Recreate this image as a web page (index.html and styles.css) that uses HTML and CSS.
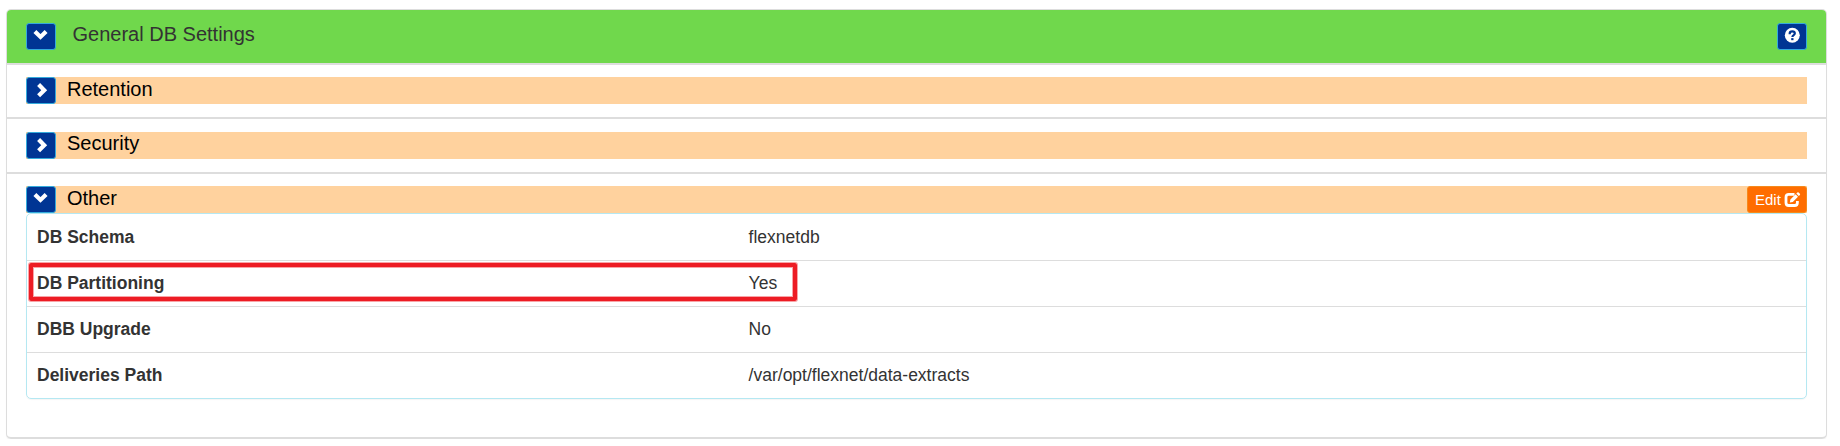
FILE: index.html
```html
<!DOCTYPE html>
<html lang="en">
<head>
<meta charset="utf-8">
<title>General DB Settings</title>
<link rel="stylesheet" href="styles.css">
</head>
<body>
<main class="panel">
  <header class="panel-head">
    <button class="btn" aria-label="Collapse"><svg class="icon" viewBox="0 0 28 25"><path d="M7.9 7.5 13.5 12.9 19.1 7.5" fill="none" stroke="#fff" stroke-width="4.2"/></svg></button>
    <h1 class="title">General DB Settings</h1>
    <button class="btn help" aria-label="Help"><svg class="icon" viewBox="0 0 28 25"><circle cx="14.3" cy="11.2" r="7.5" fill="#fff"/><path d="M11.7 10.2V9.6C11.7 8 12.7 7.4 14.3 7.4S16.8 8.2 16.8 9.6C16.8 11.2 14.4 11 14.4 12.9" fill="none" stroke="#003594" stroke-width="2.2"/><path d="M13.2 14.1h2.3v2.1h-2.3z" fill="#003594"/></svg></button>
  </header>
  <section class="section">
    <div class="bar">
      <button class="btn" aria-label="Expand"><svg class="icon" viewBox="0 0 28 25"><path d="M11.6 6.6 17.2 12.2 11.6 17.8" fill="none" stroke="#fff" stroke-width="4.2"/></svg></button>
      <h2 class="bar-title">Retention</h2>
    </div>
  </section>
  <section class="section">
    <div class="bar">
      <button class="btn" aria-label="Expand"><svg class="icon" viewBox="0 0 28 25"><path d="M11.6 6.6 17.2 12.2 11.6 17.8" fill="none" stroke="#fff" stroke-width="4.2"/></svg></button>
      <h2 class="bar-title raised">Security</h2>
    </div>
  </section>
  <section class="section other">
    <div class="bar">
      <button class="btn" aria-label="Collapse"><svg class="icon" viewBox="0 0 28 25"><path d="M7.9 7.5 13.5 12.9 19.1 7.5" fill="none" stroke="#fff" stroke-width="4.2"/></svg></button>
      <h2 class="bar-title">Other</h2>
      <button class="edit">Edit <svg class="edit-icon" viewBox="0 0 17 16"><path d="M10.5 2.4H4.8Q2 2.4 2 5.2V10.7Q2 13.5 4.8 13.5H10.6Q13.4 13.5 13.4 10.7V9" fill="none" stroke="#fff" stroke-width="2.8"/><path d="M5.8 10.5 6.4 7.5 11.6 2.3 14 4.7 8.8 9.9ZM12.3 1.6 13.4.5Q14 0 14.6.5L15.9 1.8Q16.4 2.4 15.9 3L14.8 4.1Z" fill="#fff"/></svg></button>
    </div>
    <dl class="details">
      <div class="row"><dt>DB Schema</dt><dd>flexnetdb</dd></div>
      <div class="row marked"><dt>DB Partitioning</dt><dd>Yes</dd></div>
      <div class="row"><dt>DBB Upgrade</dt><dd>No</dd></div>
      <div class="row"><dt>Deliveries Path</dt><dd>/var/opt/flexnet/data-extracts</dd></div>
    </dl>
  </section>
</main>
</body>
</html>
```

FILE: styles.css
```css
*, *::after { box-sizing: border-box; }
body {
  margin: 0;
  padding: 9px 13px 0 6px;
  background: #fff;
  color: #333;
  font-family: "Liberation Sans", Arial, sans-serif;
}
h1, h2, dl, dd { margin: 0; font-weight: 400; }
.panel {
  height: 430px;
  border: 1px solid #ddd;
  border-bottom-width: 2px;
  border-radius: 5px;
  box-shadow: 0 1px 1px rgba(0, 0, 0, .06);
}
.panel-head {
  display: flex;
  height: 55px;
  padding: 13px 19px 0;
  border-bottom: 2px solid #ddd;
  border-radius: 4px 4px 0 0;
  background: #70d84c;
}
.btn {
  flex: none;
  width: 30px;
  height: 27px;
  padding: 0;
  border: 1px solid #34abdc;
  border-radius: 3px;
  background: #003594;
}
.icon { display: block; width: 28px; height: 25px; }
.title { margin-left: 16.5px; font-size: 20px; line-height: 22px; }
.help { margin-left: auto; }
.section { height: 55px; padding: 13px 19px 0; border-bottom: 2px solid #ddd; }
.section.other { height: auto; padding-top: 12px; border: 0; }
.section:nth-of-type(1) { height: 54px; padding-top: 12px; }
.bar { display: flex; height: 27px; background: #ffd29e; }
.bar-title { margin-left: 11px; color: #000; font-size: 20px; line-height: 24px; }
.bar-title.raised { line-height: 22px; }
.edit {
  display: flex;
  align-items: center;
  gap: 3px;
  width: 60px;
  height: 27px;
  margin-left: auto;
  padding: 0 5px 0 7px;
  border: 1px solid #f58a1c;
  border-radius: 3px;
  background: #ff6d00;
  color: #fff;
  font: 15px/25px "Liberation Sans", Arial, sans-serif;
}
.edit-icon { width: 17px; height: 16px; flex: none; }
.details {
  border: 1px solid #b5e8f2;
  border-radius: 5px;
  font-size: 17.5px;
  line-height: 20px;
  box-shadow: 0 1px 1px rgba(0, 0, 0, .04);
}
.row {
  position: relative;
  display: grid;
  grid-template-columns: 40% 60%;
  height: 46px;
  padding-top: 13px;
}
.row + .row { border-top: 1px solid #ddd; padding-top: 12px; }
.row dt, .row dd { padding-left: 10px; }
.row dt { font-weight: 700; }
.marked::after {
  content: "";
  position: absolute;
  top: 2px;
  left: 2px;
  width: 768px;
  height: 38px;
  border: 4px solid #ed1c24;
  border-radius: 2px;
  box-shadow: 0 0 0 1px rgba(237, 28, 36, .4), inset 0 0 0 1px rgba(237, 28, 36, .4);
}
```
